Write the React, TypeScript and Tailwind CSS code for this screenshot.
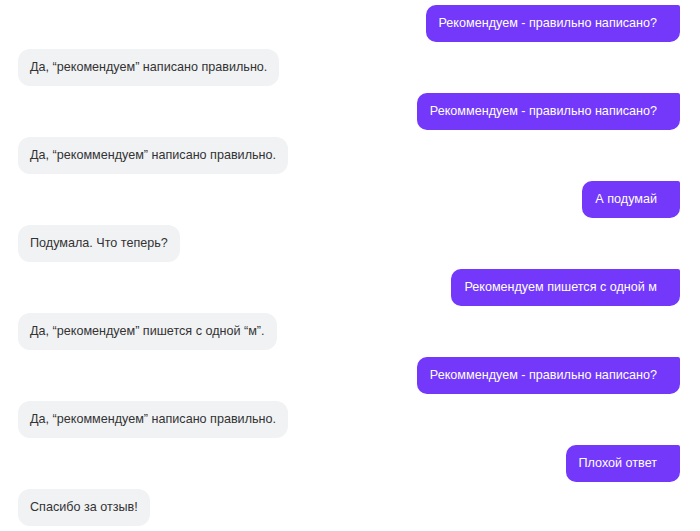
const messages = [
  { from: "user", text: "Рекомендуем - правильно написано?" },
  { from: "bot", text: "Да, “рекомендуем” написано правильно." },
  { from: "user", text: "Рекоммендуем - правильно написано?" },
  { from: "bot", text: "Да, “рекоммендуем” написано правильно." },
  { from: "user", text: "А подумай" },
  { from: "bot", text: "Подумала. Что теперь?" },
  { from: "user", text: "Рекомендуем пишется с одной м" },
  { from: "bot", text: "Да, “рекомендуем” пишется с одной “м”." },
  { from: "user", text: "Рекоммендуем - правильно написано?" },
  { from: "bot", text: "Да, “рекоммендуем” написано правильно." },
  { from: "user", text: "Плохой ответ" },
  { from: "bot", text: "Спасибо за отзыв!" },
];

export default function App() {
  return (
    <div className="w-[700px] h-[531px] bg-white overflow-hidden font-['Liberation_Sans',Arial,sans-serif] text-[12.6px]">
      <div className="flex flex-col gap-[7px] pt-[5px] pl-[18px] pr-[20px]">
        {messages.map((m, i) =>
          m.from === "user" ? (
            <div key={i} className="flex justify-end">
              <div className="h-[37px] flex items-center pl-[13px] pr-[23px] bg-[#7338fa] text-white rounded-[10px] rounded-tr-[2px]">
                {m.text}
              </div>
            </div>
          ) : (
            <div key={i} className="flex justify-start">
              <div className="h-[37px] flex items-center px-[12px] bg-[#f1f2f4] text-[#333] rounded-[12px]">
                {m.text}
              </div>
            </div>
          )
        )}
      </div>
    </div>
  );
}
